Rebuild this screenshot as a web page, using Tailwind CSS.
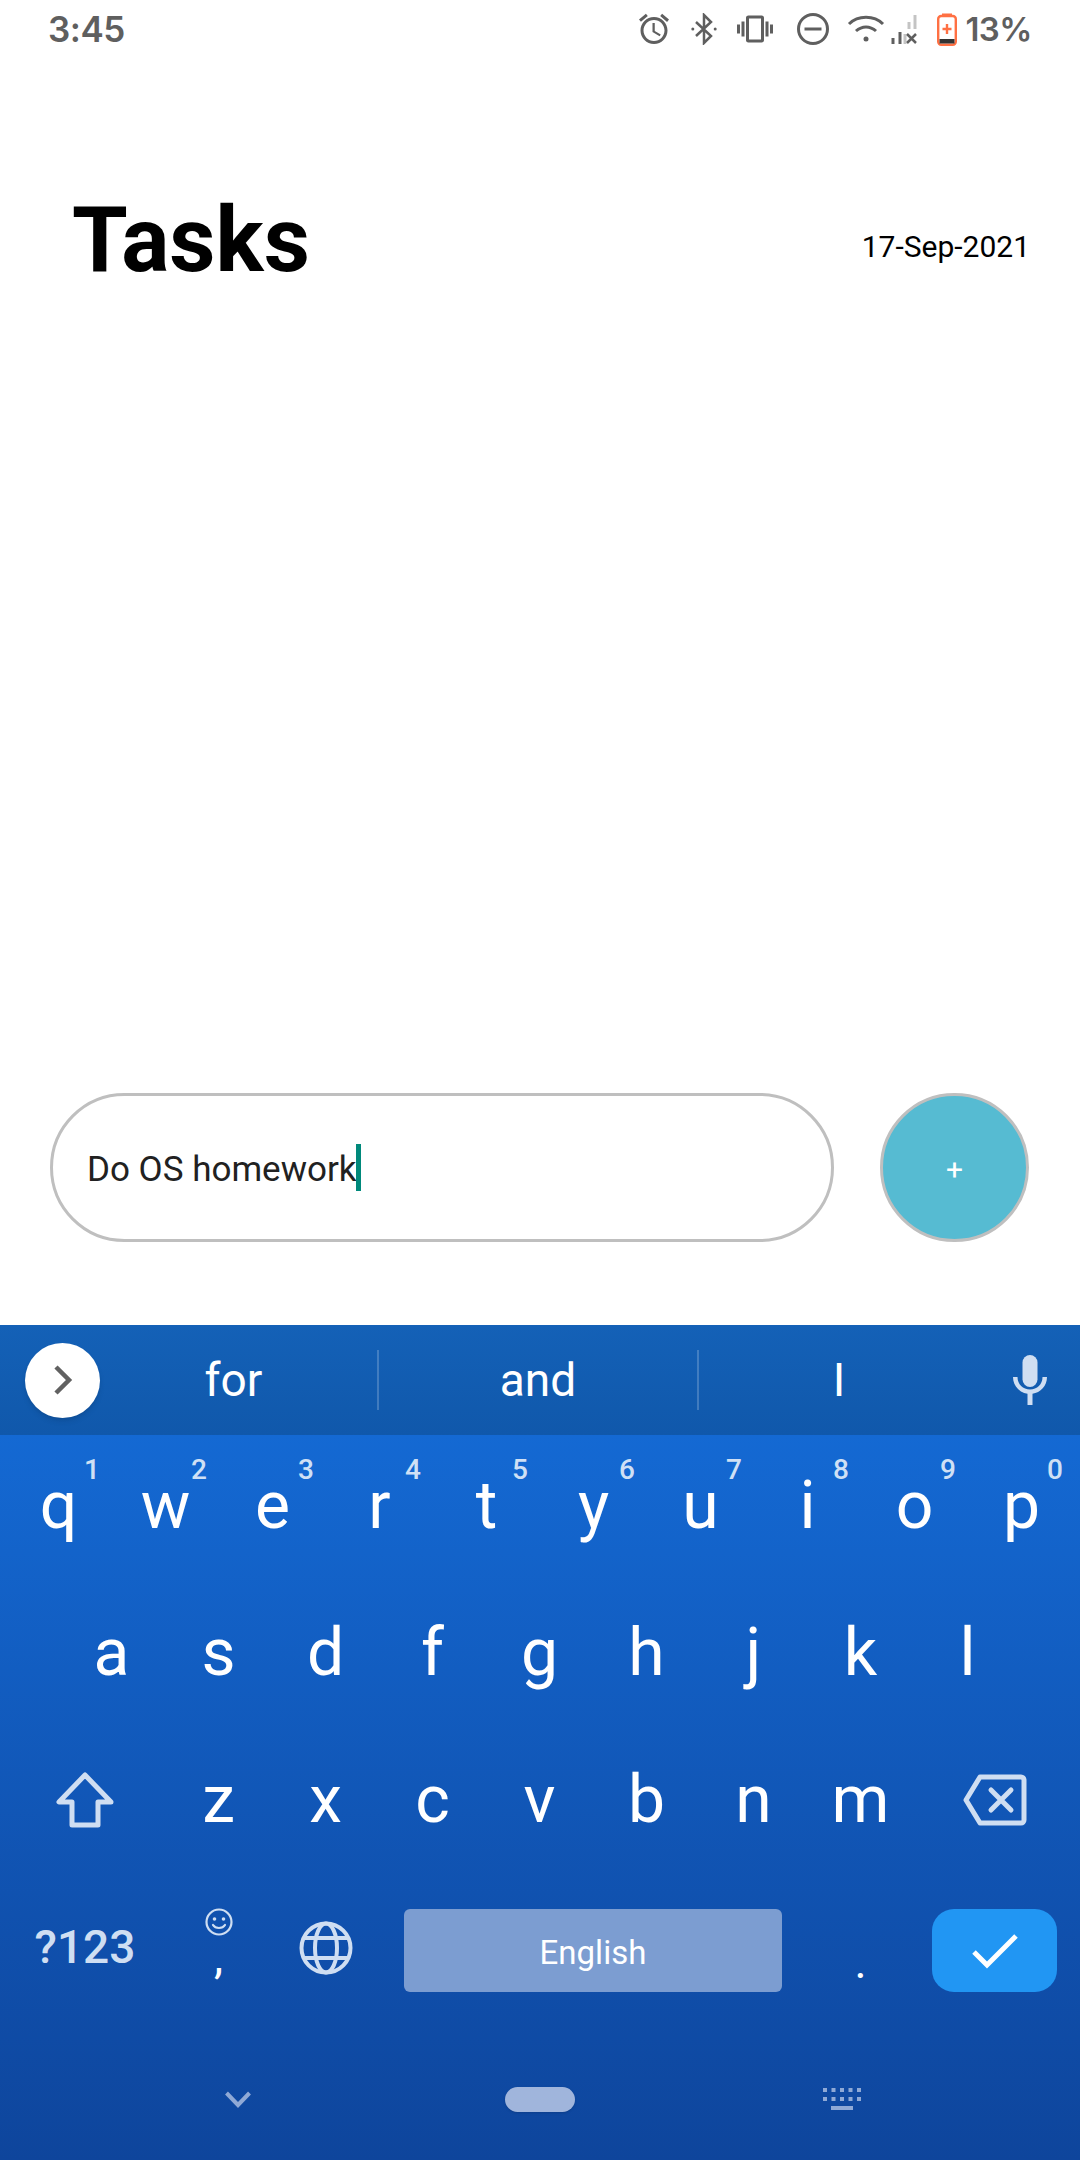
<!DOCTYPE html>
<html lang="en">
<head>
    <meta charset="UTF-8">
    <meta name="viewport" content="width=device-width, initial-scale=1.0">
    <title>Tasks</title>
    <script src="https://cdn.jsdelivr.net/npm/@tailwindcss/browser@4"></script>
</head>
<body class="bg-white font-['Roboto',sans-serif]">
<div class="w-[1080px] h-[2160px] flex flex-col overflow-hidden">

    <!-- Status bar -->
    <div class="h-[58px] pl-[48px] pr-[48px] flex items-center justify-between text-[#5f5f5f] shrink-0">
        <span class="font-['Inter',sans-serif] font-semibold text-[35px] tracking-[-0.5px] leading-none">3:45</span>
        <div class="flex items-center">
            <svg class="w-[36px] h-[36px]" viewBox="0 0 24 24" fill="currentColor"><path d="M22 5.72l-4.6-3.86-1.29 1.53 4.6 3.86L22 5.72zM7.88 3.39L6.6 1.86 2 5.71l1.29 1.53 4.59-3.85zM12.5 8H11v6l4.75 2.85.75-1.23-4-2.37V8zM12 4c-4.97 0-9 4.03-9 9s4.02 9 9 9c4.97 0 9-4.03 9-9s-4.03-9-9-9zm0 16c-3.87 0-7-3.13-7-7s3.13-7 7-7 7 3.13 7 7-3.13 7-7 7z"/></svg>
            <svg class="w-[26px] h-[32px] ml-[19px]" viewBox="0 0 26 32" fill="none" stroke="currentColor" stroke-width="2.500"><path d="M5 9l15 14-7 7V2l7 7L5 23"/><circle cx="1.800" cy="16" r="1.500" fill="currentColor" stroke="none"/><circle cx="24.200" cy="16" r="1.500" fill="currentColor" stroke="none"/></svg>
            <svg class="w-[36px] h-[36px] ml-[20px]" viewBox="0 0 24 24" fill="currentColor"><path d="M0 15h2V9H0v6zm3 2h2V7H3v10zm19-8v6h2V9h-2zm-3 8h2V7h-2v10zM16.5 3h-9C6.67 3 6 3.67 6 4.5v15c0 .83.67 1.5 1.5 1.5h9c.83 0 1.5-.67 1.5-1.5v-15c0-.83-.67-1.5-1.5-1.5zM16 19H8V5h8v14z"/></svg>
            <svg class="w-[34px] h-[34px] ml-[23px]" viewBox="0 0 34 34" fill="none" stroke="currentColor" stroke-width="3"><circle cx="17" cy="17" r="14.5"/><path d="M8.5 17h17"/></svg>
            <svg class="w-[38px] h-[32px] ml-[17px]" viewBox="0 0 38 32" fill="none" stroke="currentColor" stroke-width="3"><path d="M2 11C11 2 27 2 36 11"/><path d="M9 18c6-5.500 14-5.500 20 0"/><circle cx="19" cy="26" r="2.500" fill="currentColor" stroke="none"/></svg>
            <svg class="w-[26px] h-[30px] ml-[6px]" viewBox="0 0 26 30" fill="none" stroke-width="3"><path d="M2 30v-6" stroke="#5f5f5f"/><path d="M9 30V18" stroke="#5f5f5f"/><path d="M14 20v10" stroke="#c4c4c4"/><path d="M18 15V8" stroke="#c4c4c4"/><path d="M24 15V1" stroke="#c4c4c4"/><path d="M16 20l9 9M25 20l-9 9" stroke="#5f5f5f" stroke-width="2.500"/></svg>
            <svg class="w-[20px] h-[33px] ml-[20px]" viewBox="0 0 20 33"><path d="M6 2.500V1.500h8v1" fill="none" stroke="#ff7043" stroke-width="2"/><rect x="1.200" y="3" width="17.600" height="28.800" rx="3" fill="none" stroke="#ff7043" stroke-width="2.400"/><rect x="2.500" y="26" width="15" height="4.500" fill="#333333"/><path d="M10 11v10M5.500 16h9" stroke="#ff7043" stroke-width="2.400"/></svg>
            <span class="font-['Inter',sans-serif] font-semibold text-[33px] tracking-[-0.5px] leading-none ml-[8px]">13%</span>
        </div>
    </div>

    <!-- Header -->
    <div class="flex items-center justify-between pl-[72px] pr-[50px] pt-[138px] shrink-0">
        <h1 class="text-[90px] font-bold leading-none text-black">Tasks</h1>
        <span class="text-[30px] leading-none text-black mt-[12px]">17-Sep-2021</span>
    </div>

    <!-- Input row -->
    <div class="flex-1 flex items-end gap-[46px] pl-[50px] pr-[51px] pb-[83px]">
        <div class="flex-1 h-[149px] rounded-full border-[3px] border-[#bfbfbf] flex items-center pl-[34px]">
            <span class="text-[35px] leading-none text-[#212121] pt-[3px]">Do OS homework</span>
            <span class="w-[5px] h-[47px] bg-[#00897b] -ml-[1px]"></span>
        </div>
        <button class="w-[149px] h-[149px] rounded-full bg-[#56bbd2] border-[3px] border-[#bfbfbf] text-white text-[30px] leading-none flex items-center justify-center pt-[4px]">+</button>
    </div>

    <!-- Keyboard -->
    <div class="shrink-0 h-[835px] flex flex-col">
        <!-- Suggestions -->
        <div class="h-[110px] bg-linear-to-b from-[#1461b7] to-[#1058ab] flex items-center text-white text-[46px] pl-[25px] pr-[32px]">
            <div class="w-[75px] h-[75px] rounded-full bg-white shadow-md flex items-center justify-center">
                <svg class="w-[40px] h-[40px]" viewBox="0 0 40 40" fill="none" stroke="#616161" stroke-width="4.500"><path d="M13 7l13 13-13 13"/></svg>
            </div>
            <div class="w-[270px] pr-[3px] flex items-center justify-center">for</div>
            <div class="w-[2px] h-[60px] bg-white/20 ml-[7px]"></div>
            <div class="w-[318px] flex items-center justify-center">and</div>
            <div class="w-[2px] h-[60px] bg-white/20"></div>
            <div class="w-[280px] flex items-center justify-center">I</div>
            <svg class="w-[36px] h-[50px] ml-auto" viewBox="0 0 36 50" fill="#cfdef2"><rect x="10.500" y="0" width="15" height="32" rx="7.500"/><path d="M1 22h4.500c0 7.500 5.500 12.500 12.500 12.500S30.500 29.500 30.500 22H35c0 9-6.500 15.500-14.500 16.800V50h-5V38.800C7.500 37.500 1 31 1 22z"/></svg>
        </div>

        <div class="flex-1 bg-linear-to-b from-[#1469d3] to-[#0e459c] flex flex-col">
            <!-- Row 1 -->
            <div class="h-[147px] px-[5px] flex text-white text-[66px] leading-none">
                <div class="relative w-[107px] flex items-center justify-center pb-[5px]">q<span class="absolute top-[21px] right-[12px] text-[28px] font-medium text-[#cfe0f5]">1</span></div>
                <div class="relative w-[107px] flex items-center justify-center pb-[5px]">w<span class="absolute top-[21px] right-[12px] text-[28px] font-medium text-[#cfe0f5]">2</span></div>
                <div class="relative w-[107px] flex items-center justify-center pb-[5px]">e<span class="absolute top-[21px] right-[12px] text-[28px] font-medium text-[#cfe0f5]">3</span></div>
                <div class="relative w-[107px] flex items-center justify-center pb-[5px]">r<span class="absolute top-[21px] right-[12px] text-[28px] font-medium text-[#cfe0f5]">4</span></div>
                <div class="relative w-[107px] flex items-center justify-center pb-[5px]">t<span class="absolute top-[21px] right-[12px] text-[28px] font-medium text-[#cfe0f5]">5</span></div>
                <div class="relative w-[107px] flex items-center justify-center pb-[5px]">y<span class="absolute top-[21px] right-[12px] text-[28px] font-medium text-[#cfe0f5]">6</span></div>
                <div class="relative w-[107px] flex items-center justify-center pb-[5px]">u<span class="absolute top-[21px] right-[12px] text-[28px] font-medium text-[#cfe0f5]">7</span></div>
                <div class="relative w-[107px] flex items-center justify-center pb-[5px]">i<span class="absolute top-[21px] right-[12px] text-[28px] font-medium text-[#cfe0f5]">8</span></div>
                <div class="relative w-[107px] flex items-center justify-center pb-[5px]">o<span class="absolute top-[21px] right-[12px] text-[28px] font-medium text-[#cfe0f5]">9</span></div>
                <div class="relative w-[107px] flex items-center justify-center pb-[5px]">p<span class="absolute top-[21px] right-[12px] text-[28px] font-medium text-[#cfe0f5]">0</span></div>
            </div>
            <!-- Row 2 -->
            <div class="h-[147px] pl-[58px] flex text-white text-[66px] leading-none">
                <div class="w-[107px] flex items-center justify-center pb-[5px]">a</div>
                <div class="w-[107px] flex items-center justify-center pb-[5px]">s</div>
                <div class="w-[107px] flex items-center justify-center pb-[5px]">d</div>
                <div class="w-[107px] flex items-center justify-center pb-[5px]">f</div>
                <div class="w-[107px] flex items-center justify-center pb-[5px]">g</div>
                <div class="w-[107px] flex items-center justify-center pb-[5px]">h</div>
                <div class="w-[107px] flex items-center justify-center pb-[5px]">j</div>
                <div class="w-[107px] flex items-center justify-center pb-[5px]">k</div>
                <div class="w-[107px] flex items-center justify-center pb-[5px]">l</div>
            </div>
            <!-- Row 3 -->
            <div class="h-[147px] px-[5px] flex text-white text-[66px] leading-none">
                <div class="w-[160px] flex items-center justify-center pb-[5px]">
                    <svg class="w-[58px] h-[56px]" viewBox="0 0 58 56" fill="none" stroke="#cfdef2" stroke-width="5" stroke-linejoin="round"><path d="M29 3L3 30h13v23h26V30h13z"/></svg>
                </div>
                <div class="w-[107px] flex items-center justify-center pb-[5px]">z</div>
                <div class="w-[107px] flex items-center justify-center pb-[5px]">x</div>
                <div class="w-[107px] flex items-center justify-center pb-[5px]">c</div>
                <div class="w-[107px] flex items-center justify-center pb-[5px]">v</div>
                <div class="w-[107px] flex items-center justify-center pb-[5px]">b</div>
                <div class="w-[107px] flex items-center justify-center pb-[5px]">n</div>
                <div class="w-[107px] flex items-center justify-center pb-[5px]">m</div>
                <div class="w-[161px] flex items-center justify-center pb-[5px]">
                    <svg class="w-[64px] h-[52px]" viewBox="0 0 64 52" fill="none" stroke="#cfdef2" stroke-width="5" stroke-linejoin="round" stroke-linecap="round"><path d="M17 3h41a3 3 0 0 1 3 3v40a3 3 0 0 1-3 3H17L3 26z"/><path d="M28 16l20 20M48 16L28 36"/></svg>
                </div>
            </div>
            <!-- Row 4 -->
            <div class="h-[147px] px-[5px] pt-[2px] flex items-center text-[#cfdef2]">
                <div class="w-[160px] flex justify-center text-[46px] font-medium leading-none pb-[8px]">?123</div>
                <div class="w-[107px] flex flex-col items-center pb-[24px]">
                    <svg class="w-[28px] h-[28px]" viewBox="0 0 28 28" fill="none" stroke="#cfdef2" stroke-width="2.200" stroke-linecap="round"><circle cx="14" cy="14" r="12.500"/><circle cx="9.500" cy="11" r="1.800" fill="#cfdef2" stroke="none"/><circle cx="18.500" cy="11" r="1.800" fill="#cfdef2" stroke="none"/><path d="M8 17c2.500 4 9.500 4 12 0"/></svg>
                    <span class="text-white text-[46px] leading-[26px] h-[26px] mt-[8px]">,</span>
                </div>
                <div class="w-[107px] flex justify-center pb-[6px]">
                    <svg class="w-[54px] h-[54px]" viewBox="0 0 54 54" fill="none" stroke="#cfdef2" stroke-width="4"><circle cx="27" cy="27" r="24.500"/><ellipse cx="27" cy="27" rx="11" ry="24.500"/><path d="M5 17h44M5 37h44"/></svg>
                </div>
                <div class="w-[428px] px-[25px]">
                    <div class="h-[83px] rounded-[6px] bg-[#7c9dd1] flex items-center justify-center text-white text-[33px] leading-none pt-[3px]">English</div>
                </div>
                <div class="w-[107px] flex justify-center text-white text-[46px] leading-none pt-[22px]">.</div>
                <div class="w-[161px] pl-[18px] pr-[18px]">
                    <div class="h-[83px] rounded-[22px] bg-[#2196f3] flex items-center justify-center">
                        <svg class="w-[46px] h-[36px]" viewBox="0 0 46 36" fill="none" stroke="#ffffff" stroke-width="5"><path d="M2 19l13 13L44 3"/></svg>
                    </div>
                </div>
            </div>
            <!-- Nav row -->
            <div class="flex-1 flex items-center pt-[16px]">
                <div class="w-[505px] flex justify-center pr-[29px]">
                    <svg class="w-[26px] h-[18px]" viewBox="0 0 26 18" fill="none" stroke="#8fa9d6" stroke-width="4"><path d="M1.500 2L13 14 24.500 2"/></svg>
                </div>
                <div class="w-[70px] h-[25px] rounded-full bg-[#a0b5dc] shadow-sm"></div>
                <div class="w-[505px] flex justify-center pl-[28px]">
                    <svg class="w-[38px] h-[24px]" viewBox="0 0 38 24" fill="#8fa9d6"><path d="M0 0h4v4H0zM8.500 0h4v4h-4zM17 0h4v4h-4zM25.500 0h4v4h-4zM34 0h4v4h-4zM0 9h4v4H0zM8.500 9h4v4h-4zM17 9h4v4h-4zM25.500 9h4v4h-4zM34 9h4v4h-4zM8 18h22v4H8z"/></svg>
                </div>
            </div>
        </div>
    </div>
</div>
</body>
</html>
